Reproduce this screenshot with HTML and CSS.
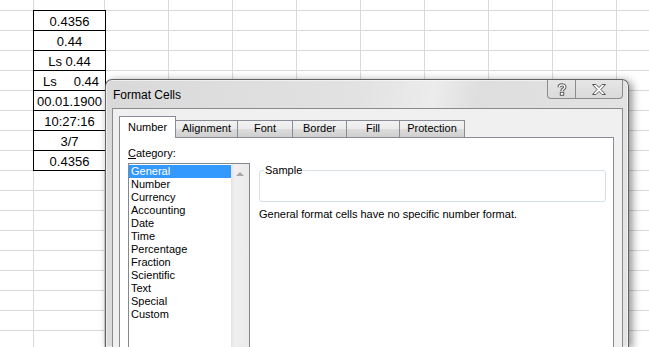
FILE: index.html
```html
<!DOCTYPE html>
<html lang="en">
<head>
    <meta charset="UTF-8">
    <title>Format Cells</title>
    <link rel="stylesheet" href="styles.css">
</head>
<body>
    <div class="sheet">
        <div class="cells">
            <div class="cell">0.4356</div>
            <div class="cell">0.44</div>
            <div class="cell">Ls 0.44</div>
            <div class="cell split"><span>Ls</span><span>0.44</span></div>
            <div class="cell">00.01.1900</div>
            <div class="cell">10:27:16</div>
            <div class="cell">3/7</div>
            <div class="cell">0.4356</div>
        </div>
    </div>

    <div class="dialog">
        <div class="titlebar">
            <span class="title">Format Cells</span>
            <div class="caption-btns">
                <div class="cap-btn help">
                    <svg width="10" height="13" viewBox="0 0 10 13">
                        <path d="M2.2 4.2 C2.2 1.2 7.8 1.2 7.8 4 C7.8 6 5 6 5 8" fill="none" stroke="#5a5a5a" stroke-width="3.4"/>
                        <rect x="3.3" y="9.3" width="3.4" height="3" fill="#fff" stroke="#5a5a5a" stroke-width="1"/>
                        <path d="M2.2 4.2 C2.2 1.2 7.8 1.2 7.8 4 C7.8 6 5 6 5 8" fill="none" stroke="#fff" stroke-width="1.4"/>
                    </svg>
                </div>
                <div class="cap-btn close">
                    <svg width="14" height="11" viewBox="0 0 14 11">
                        <polygon points="0.5,0.5 4,0.5 7,3.6 10,0.5 13.5,0.5 8.9,5.5 13.5,10.5 10,10.5 7,7.4 4,10.5 0.5,10.5 5.1,5.5" fill="#fff" stroke="#5a5a5a" stroke-width="1"/>
                    </svg>
                </div>
            </div>
        </div>

        <div class="client">
            <div class="tabs">
                <div class="tab active">Number</div>
                <div class="tab w-align">Alignment</div>
                <div class="tab w-font">Font</div>
                <div class="tab w-border">Border</div>
                <div class="tab w-fill">Fill</div>
                <div class="tab w-prot">Protection</div>
            </div>
            <div class="panel">
                <div class="left-col">
                    <div class="label"><u>C</u>ategory:</div>
                    <div class="listbox">
                        <ul class="items">
                            <li class="selected">General</li>
                            <li>Number</li>
                            <li>Currency</li>
                            <li>Accounting</li>
                            <li>Date</li>
                            <li>Time</li>
                            <li>Percentage</li>
                            <li>Fraction</li>
                            <li>Scientific</li>
                            <li>Text</li>
                            <li>Special</li>
                            <li>Custom</li>
                        </ul>
                        <div class="scrollbar">
                            <div class="arrow-up"></div>
                        </div>
                    </div>
                </div>
                <div class="right-col">
                    <fieldset class="sample">
                        <legend>Sample</legend>
                        <div class="sample-body"></div>
                    </fieldset>
                    <p class="desc">General format cells have no specific number format.</p>
                </div>
            </div>
        </div>
    </div>
</body>
</html>
```

FILE: styles.css
```css
body {
    margin: 0;
    width: 649px;
    height: 347px;
    overflow: hidden;
    position: relative;
    background: #fff;
    font-family: "Liberation Sans", Arial, sans-serif;
}

/* worksheet grid */
.sheet {
    height: 347px;
    box-sizing: border-box;
    padding: 10px 0 0 33px;
    background-image:
        linear-gradient(to right, transparent 33px, #d9d9d9 33px, #d9d9d9 34px, transparent 34px),
        repeating-linear-gradient(to right, #d9d9d9 0, #d9d9d9 1px, transparent 1px, transparent 64px),
        repeating-linear-gradient(to bottom, #d9d9d9 0, #d9d9d9 1px, transparent 1px, transparent 20px);
    background-size: 100% 100%, calc(100% - 104px) 100%, 100% 360px;
    background-position: 0 0, 104px 0, 0 10px;
    background-repeat: no-repeat, no-repeat, repeat;
}
.cells {
    width: 72px;
    border-top: 1px solid #000;
    border-left: 1px solid #000;
    background: #fff;
}
.cell {
    height: 20px;
    box-sizing: border-box;
    border-right: 1px solid #000;
    border-bottom: 1px solid #000;
    font-size: 13px;
    line-height: 17px;
    padding-top: 2px;
    text-align: center;
    color: #000;
}
.cell.split {
    display: flex;
    justify-content: space-between;
    padding: 2px 6px 0 9px;
}

/* dialog window */
.dialog {
    position: absolute;
    left: 105px;
    top: 79px;
    width: 524px;
    height: 268px;
    box-sizing: border-box;
    border: 1px solid #626262;
    border-bottom: none;
    border-radius: 7px 7px 0 0;
    background: linear-gradient(100deg, #d9d9d9 0%, #e2e2e2 45%, #ececec 58%, #dedede 66%, #e4e4e4 100%);
    box-shadow: 3px 2px 8px rgba(0, 0, 0, 0.45), inset 0 0 0 1px rgba(255, 255, 255, 0.55);
    display: flex;
    flex-direction: column;
    font-size: 11px;
    color: #000;
}
.titlebar {
    height: 28px;
    display: flex;
    justify-content: space-between;
    align-items: flex-start;
    flex-shrink: 0;
}
.title {
    font-size: 12px;
    margin: 8px 0 0 7px;
}
.caption-btns {
    display: flex;
    margin-right: 5px;
    border: 1px solid #8c8c8c;
    border-top: none;
    border-radius: 0 0 4px 4px;
    background: linear-gradient(#e6e6e6, #dadada);
    height: 18px;
}
.cap-btn {
    display: flex;
    justify-content: center;
    align-items: center;
}
.help {
    width: 27px;
    border-right: 1px solid #8c8c8c;
}
.close {
    width: 46px;
}

.client {
    flex: 1;
    min-height: 0;
    margin: 0 5px 0 6px;
    border: 1px solid #8a8b8d;
    border-bottom: none;
    background: #f0f0f0;
    padding: 7px 8px 0 6px;
    display: flex;
    flex-direction: column;
}
.tabs {
    display: flex;
    align-items: flex-end;
    height: 21px;
    flex-shrink: 0;
}
.tab {
    height: 17px;
    box-sizing: border-box;
    border: 1px solid #898c95;
    border-bottom: none;
    border-left: none;
    background: linear-gradient(#f2f2f2 0%, #ebebeb 50%, #dddddd 51%, #cfcfcf 100%);
    text-align: center;
    line-height: 15px;
}
.tab.active {
    height: 22px;
    width: 57px;
    margin-bottom: -1px;
    border-left: 1px solid #898c95;
    background: #fff;
    position: relative;
    z-index: 1;
    line-height: 20px;
}
.w-align { width: 62px; }
.w-font { width: 55px; }
.w-border { width: 54px; }
.w-fill { width: 53px; }
.w-prot { width: 65px; }

.panel {
    flex: 1;
    min-height: 0;
    border: 1px solid #898c95;
    border-bottom: none;
    background: #fff;
    display: flex;
    gap: 9px;
    padding: 9px 7px 0 8px;
}
.left-col {
    width: 122px;
    display: flex;
    flex-direction: column;
}
.label {
    line-height: 13px;
    margin-bottom: 3px;
}
.listbox {
    flex: 1;
    border: 1px solid #828790;
    border-bottom: none;
    padding-top: 1px;
    display: flex;
}
.items {
    list-style: none;
    margin: 0;
    padding: 0;
    width: 102px;
}
.items li {
    line-height: 13px;
    padding-left: 2px;
}
.items li.selected {
    background: #3399ff;
    color: #fff;
}
.scrollbar {
    flex: 1;
    margin-top: -1px;
    background: linear-gradient(to right, #e3e3e3, #f0f0f0 20%, #eaeaea 100%);
}
.arrow-up {
    width: 0;
    height: 0;
    margin: 8px auto 0;
    border-left: 4px solid transparent;
    border-right: 4px solid transparent;
    border-bottom: 4px solid #a6a6a6;
}

.right-col {
    flex: 1;
}
.sample {
    margin: 17px 0 0;
    padding: 0;
    border: 1px solid #d5dfe5;
    border-radius: 3px;
}
.sample legend {
    margin-left: 4px;
    padding: 0 1px;
    line-height: 13px;
}
.sample-body {
    height: 24px;
}
.desc {
    margin: 6px 0 0;
    line-height: 13px;
}
```
